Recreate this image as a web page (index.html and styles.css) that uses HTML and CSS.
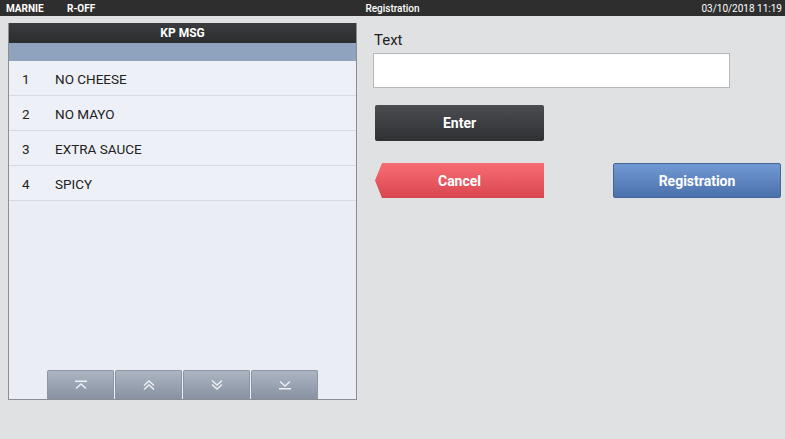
FILE: index.html
```html
<!DOCTYPE html>
<html lang="en">
<head>
  <meta charset="UTF-8" />
  <title>Registration</title>
  <link rel="stylesheet" href="styles.css">
</head>
<body>
  <div class="topbar">
    <span class="user">MARNIE</span>
    <span class="mode">R-OFF</span>
    <span class="title">Registration</span>
    <span class="clock">03/10/2018 11:19</span>
  </div>

  <div class="main">
    <div class="panel">
      <div class="panel-head">KP MSG</div>
      <div class="panel-band"></div>
      <ul class="msg-list">
        <li><span class="num">1</span>NO CHEESE</li>
        <li><span class="num">2</span>NO MAYO</li>
        <li><span class="num">3</span>EXTRA SAUCE</li>
        <li><span class="num">4</span>SPICY</li>
      </ul>
      <div class="nav">
        <button class="nav-btn" type="button">
          <svg width="14" height="10" viewBox="0 0 14 10"><path d="M1 1.2H13M2 8.5L7 4L12 8.5" fill="none" stroke="#eef1f5" stroke-width="1.4"/></svg>
        </button>
        <button class="nav-btn" type="button">
          <svg width="14" height="10" viewBox="0 0 14 10"><path d="M2 5.5L7 1L12 5.5M2 9.5L7 5L12 9.5" fill="none" stroke="#eef1f5" stroke-width="1.4"/></svg>
        </button>
        <button class="nav-btn" type="button">
          <svg width="14" height="10" viewBox="0 0 14 10"><path d="M2 0.5L7 5L12 0.5M2 4.5L7 9L12 4.5" fill="none" stroke="#eef1f5" stroke-width="1.4"/></svg>
        </button>
        <button class="nav-btn" type="button">
          <svg width="14" height="10" viewBox="0 0 14 10"><path d="M2 1.5L7 6L12 1.5M1 8.8H13" fill="none" stroke="#eef1f5" stroke-width="1.4"/></svg>
        </button>
      </div>
    </div>

    <div class="form">
      <label for="texto">Text</label>
      <input type="text" id="texto" />
      <button class="btn btn-enter" type="button">Enter</button>
      <div class="actions">
        <button class="btn btn-cancel" type="button">Cancel</button>
        <button class="btn btn-reg" type="button">Registration</button>
      </div>
    </div>
  </div>
</body>
</html>
```

FILE: styles.css
```css
body {
  margin: 0;
  font-family: Roboto, 'Liberation Sans', sans-serif;
  background-color: #dfe1e3;
  color: #222;
}

.topbar {
  height: 16px;
  background-color: #2e2e2e;
  color: #fff;
  font-size: 10px;
  font-weight: bold;
  position: relative;
  display: flex;
  align-items: center;
  padding: 0 3px 0 6px;
}

.topbar .user {
  width: 61px;
}

.topbar .title {
  position: absolute;
  left: 0;
  right: 0;
  text-align: center;
  font-weight: 500;
}

.topbar .clock {
  margin-left: auto;
  font-weight: normal;
}

.main {
  display: flex;
  padding: 7px 0 0 8px;
}

.panel {
  width: 347px;
  height: 376px;
  border: 1px solid #8b8f95;
  border-top: none;
  background-color: #eaedf3;
  display: flex;
  flex-direction: column;
}

.panel-head {
  height: 20px;
  line-height: 20px;
  background: linear-gradient(#3a3c3f, #2a2c2e);
  color: #fff;
  font-weight: bold;
  font-size: 12px;
  text-align: center;
}

.panel-band {
  height: 18px;
  background-color: #8fa3bf;
}

.msg-list {
  list-style: none;
  margin: 0;
  padding: 0;
  flex: 1;
}

.msg-list li {
  height: 31px;
  line-height: 31px;
  padding-top: 3px;
  border-bottom: 1px solid #d6dae2;
  font-size: 13.5px;
  padding-left: 13px;
  background-color: #edf0f6;
}

.msg-list .num {
  display: inline-block;
  width: 33px;
}

.nav {
  display: flex;
  gap: 1px;
  padding-left: 38px;
}

.nav-btn {
  width: 67px;
  height: 29px;
  border: 1px solid #8c96a4;
  border-bottom: none;
  border-radius: 2px 2px 0 0;
  background: linear-gradient(#acb5c2, #8791a1);
  display: flex;
  align-items: center;
  justify-content: center;
  padding: 0;
}

.form {
  margin-left: 16px;
  display: flex;
  flex-direction: column;
  align-items: flex-start;
}

.form label {
  font-size: 15px;
  margin: 8px 0 0 1px;
  height: 22px;
}

.form input {
  width: 357px;
  height: 35px;
  box-sizing: border-box;
  border: 1px solid #b5b7ba;
  background-color: #fff;
}

.btn {
  width: 169px;
  height: 36px;
  border: none;
  color: #fff;
  font-family: Roboto, 'Liberation Sans', sans-serif;
  font-weight: bold;
  font-size: 14px;
  cursor: pointer;
}

.btn-enter {
  margin: 17px 0 0 2px;
  background: linear-gradient(#4b4d50, #2e3033);
  border-radius: 2px;
}

.actions {
  display: flex;
  gap: 69px;
  margin: 22px 0 0 2px;
}

.btn-cancel {
  height: 35px;
  background: linear-gradient(#f76d74, #d9464f);
  clip-path: polygon(7px 0, 100% 0, 100% 100%, 7px 100%, 0 50%);
}

.btn-reg {
  height: 35px;
  width: 168px;
  background: linear-gradient(#7199d2, #4b71ad);
  border: 1px solid #43659a;
  border-radius: 2px;
}
```
